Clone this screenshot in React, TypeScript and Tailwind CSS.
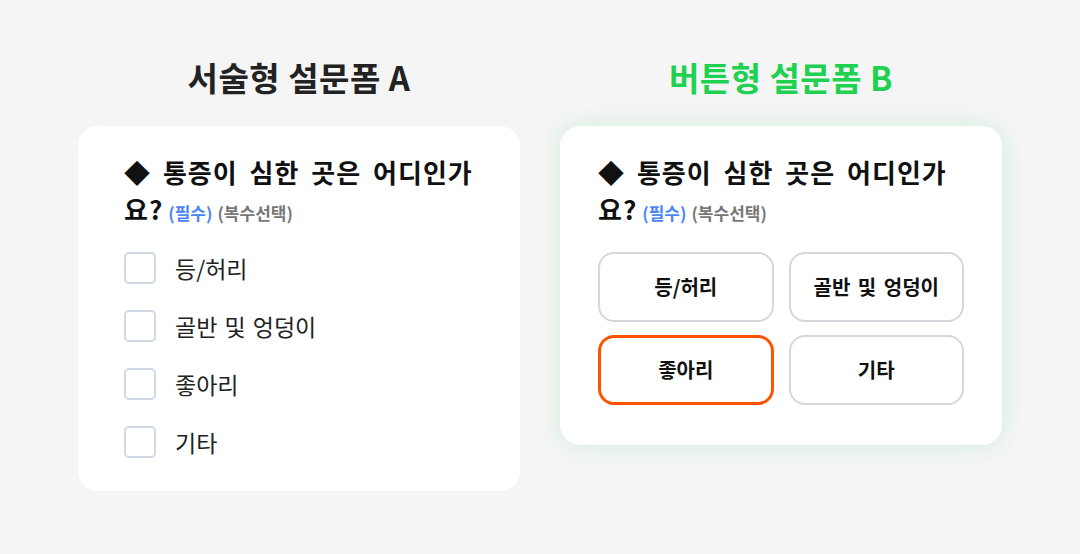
import { useState } from "react";

const OPTIONS = ["등/허리", "골반 및 엉덩이", "좋아리", "기타"];

function Question() {
  return (
    <p className="text-[26px] font-bold leading-[37px] tracking-[1px] text-[#111] [word-spacing:5px]">
      ◆ 통증이 심한 곳은 어디인가
      <br />
      요?
      <span className="ml-[5px] text-[17px] font-semibold tracking-normal text-[#4a86f7] [word-spacing:0]">(필수)</span>
      <span className="ml-[5px] text-[17px] font-semibold tracking-normal text-[#777] [word-spacing:0]">(복수선택)</span>
    </p>
  );
}

function CheckboxForm() {
  const [checked, setChecked] = useState<string[]>([]);
  const toggle = (o: string) =>
    setChecked((c) => (c.includes(o) ? c.filter((x) => x !== o) : [...c, o]));

  return (
    <div className="w-[442px] rounded-[20px] bg-white pt-[27px] pb-[33px] pl-[46px] pr-[20px]">
      <Question />
      <div className="mt-[21px] flex flex-col gap-[26px]">
        {OPTIONS.map((o) => (
          <label key={o} className="flex h-[32px] cursor-pointer items-center gap-[19px]">
            <span
              onClick={() => toggle(o)}
              className={`h-[32px] w-[32px] shrink-0 rounded-[5px] border-2 ${checked.includes(o) ? "border-[#4a86f7] bg-[#4a86f7]" : "border-[#cfd8e3] bg-white"}`}
            />
            <span className="text-[23px] leading-[32px] text-[#222] [word-spacing:2px]">{o}</span>
          </label>
        ))}
      </div>
    </div>
  );
}

function ButtonForm() {
  const [selected, setSelected] = useState<string[]>(["좋아리"]);
  const toggle = (o: string) =>
    setSelected((c) => (c.includes(o) ? c.filter((x) => x !== o) : [...c, o]));

  return (
    <div className="w-[442px] rounded-[20px] bg-white pt-[27px] pb-[40px] px-[38px] shadow-[0_0_24px_rgba(34,197,94,0.16)]">
      <Question />
      <div className="mt-[21px] grid grid-cols-2 gap-x-[15px] gap-y-[13px]">
        {OPTIONS.map((o) => (
          <button
            key={o}
            onClick={() => toggle(o)}
            className={`h-[70px] rounded-[16px] bg-white text-[20px] font-bold text-[#111] [word-spacing:3px] ${selected.includes(o) ? "border-[3px] border-[#ff5200]" : "border-2 border-[#d5d7dc]"}`}
          >
            {o}
          </button>
        ))}
      </div>
    </div>
  );
}

export default function App() {
  return (
    <div
      className="flex h-[554px] w-full items-start justify-center gap-[40px] bg-[#f5f5f5] pt-[55px]"
      style={{ fontFamily: '"Noto Sans CJK KR", "Noto Sans", sans-serif' }}
    >
      <div className="flex flex-col items-center gap-[27px]">
        <h1 className="text-[33px] font-bold leading-[44px] tracking-[0.5px] text-[#222]">서술형 설문폼 A</h1>
        <CheckboxForm />
      </div>
      <div className="flex flex-col items-center gap-[27px]">
        <h1 className="text-[33px] font-bold leading-[44px] tracking-[0.5px] text-[#1fd150]">버튼형 설문폼 B</h1>
        <ButtonForm />
      </div>
    </div>
  );
}
